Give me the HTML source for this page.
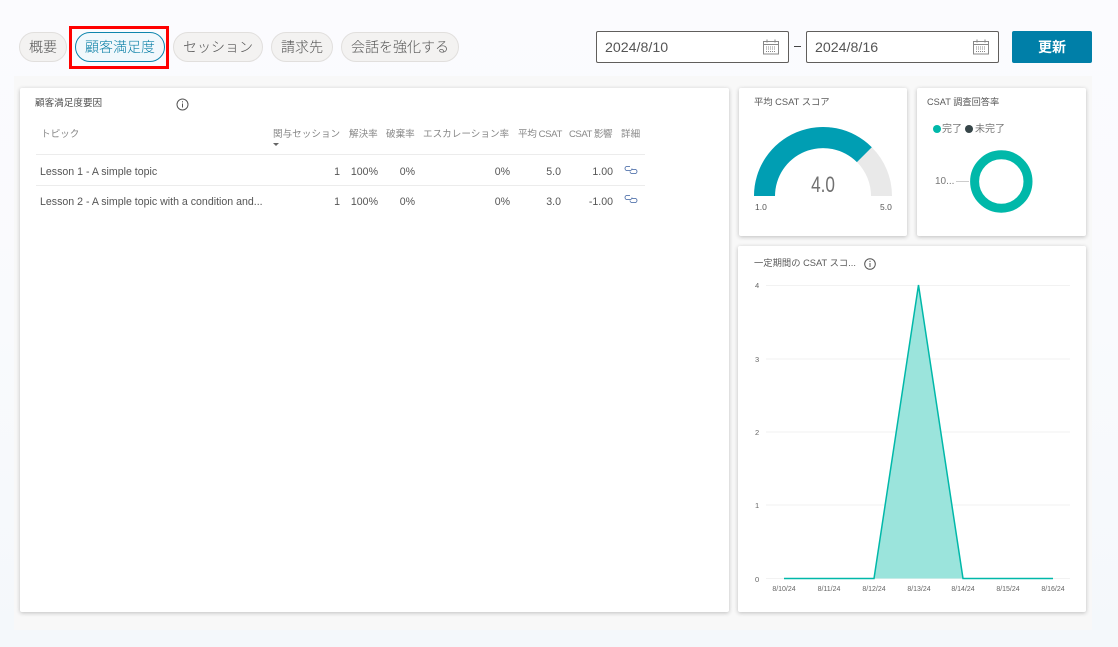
<!DOCTYPE html>
<html lang="ja"><head><meta charset="utf-8"><title>顧客満足度</title>
<style>
html,body{margin:0;padding:0}
body{width:1118px;height:647px;overflow:hidden;position:relative;background:linear-gradient(180deg,#fbfbfe 0,#f9fafd 50%,#f4f8fb 100%);font-family:"Liberation Sans","Noto Sans CJK JP",sans-serif;color:#323130}
.a{position:absolute;white-space:nowrap}
.pill{position:absolute;top:32px;height:30px;box-sizing:border-box;border:1px solid #e1dfdd;border-radius:15px;background:#f3f2f1;font-size:14px;line-height:28px;text-align:center;color:#555;font-weight:300}
.date{position:absolute;top:31px;width:193px;height:32px;box-sizing:border-box;border:1px solid #605e5c;border-radius:2px;background:#fff;font-size:14.2px;line-height:32px;padding-left:8px;color:#555}
.card{position:absolute;background:#fff;border-radius:2px;box-shadow:0 1px 4px rgba(0,0,0,.24)}
.h{position:absolute;top:128px;font-size:9.6px;line-height:13px;color:#888;white-space:nowrap}
.c{position:absolute;font-size:10.6px;line-height:14px;color:#555;white-space:nowrap}
.r{text-align:right}
.line{position:absolute;left:36px;width:609px;height:1px;background:#ececec}
.t{font-size:9.5px;color:#5a5a5a}
.x{position:absolute;top:585px;font-size:7px;line-height:9px;color:#666;width:40px;text-align:center}
.y{position:absolute;left:755px;font-size:7.5px;line-height:9px;color:#666}
</style></head><body>
<div class="a" style="left:14px;top:76px;width:1078px;height:554px;background:#f8f8f8"></div>

<div class="pill" style="left:19px;width:48px">概要</div>
<div class="pill" style="left:75px;width:90px;background:#f1f8fc;border-color:#0d85ad;color:#0a7fa6">顧客満足度</div>
<div class="pill" style="left:173px;width:90px">セッション</div>
<div class="pill" style="left:271px;width:62px">請求先</div>
<div class="pill" style="left:341px;width:118px">会話を強化する</div>
<div class="a" style="left:69px;top:26px;width:100px;height:43px;box-sizing:border-box;border:3px solid #f00"></div>

<div class="date" style="left:596px">2024/8/10</div>
<svg class="a" style="left:763px;top:39px" width="17" height="16" viewBox="0 0 17 16" fill="none" stroke="#888"><rect x=".5" y="2.5" width="15" height="12.5"/><path d="M.5 5.5h15M4 .5v3M12 .5v3"/><path d="M3 8h10M3 10h10M3 12.500h10" stroke-dasharray="1 1"/></svg>
<div class="a" style="left:794px;top:46px;width:7px;height:1px;background:#444"></div>
<div class="date" style="left:806px">2024/8/16</div>
<svg class="a" style="left:973px;top:39px" width="17" height="16" viewBox="0 0 17 16" fill="none" stroke="#888"><rect x=".5" y="2.5" width="15" height="12.500"/><path d="M.5 5.5h15M4 .5v3M12 .5v3"/><path d="M3 8h10M3 10h10M3 12.500h10" stroke-dasharray="1 1"/></svg>
<div class="a" style="left:1012px;top:31px;width:80px;height:32px;background:#007fa8;border-radius:2px;color:#fff;font-size:14px;line-height:32px;text-align:center;font-weight:700">更新</div>

<div class="card" style="left:20px;top:88px;width:709px;height:524px"></div>
<div class="a" style="left:35px;top:97px;font-size:9.6px;line-height:13px;color:#555">顧客満足度要因</div>
<svg class="a" style="left:176px;top:98px" width="13" height="13" viewBox="0 0 13 13" fill="none" stroke="#555"><circle cx="6.500" cy="6.500" r="5.500"/><path d="M6.500 5.500v4M6.500 3.200v1.200"/></svg>

<div class="h" style="left:41px">トピック</div>
<div class="h" style="left:273px">関与セッション</div>
<div class="a" style="left:273px;top:143px;width:0;height:0;border:3px solid transparent;border-top:3px solid #666"></div>
<div class="h" style="left:349px">解決率</div>
<div class="h" style="left:386px">破棄率</div>
<div class="h" style="left:423px">エスカレーション率</div>
<div class="h" style="left:518px;letter-spacing:-.4px">平均 CSAT</div>
<div class="h" style="left:569px;letter-spacing:-.5px">CSAT 影響</div>
<div class="h" style="left:621px">詳細</div>
<div class="line" style="top:154px"></div>
<div class="line" style="top:185px"></div>

<div class="c" style="left:40px;top:165px">Lesson 1 - A simple topic</div>
<div class="c r" style="left:320px;width:20px;top:165px">1</div>
<div class="c r" style="left:340px;width:38px;top:165px">100%</div>
<div class="c r" style="left:385px;width:30px;top:165px">0%</div>
<div class="c r" style="left:470px;width:40px;top:165px">0%</div>
<div class="c r" style="left:521px;width:40px;top:165px">5.0</div>
<div class="c r" style="left:573px;width:40px;top:165px">1.00</div>
<svg class="a" style="left:624px;top:165px" width="14" height="10" viewBox="0 0 14 10" fill="none" stroke="#3a5fa0" stroke-width=".8"><path d="M6 1.500H3a2 2 0 0 0 0 4h3a2 2 0 0 0 2-2"/><path d="M8 4.500h3a2 2 0 0 1 0 4H8a2 2 0 0 1-2-2"/></svg>

<div class="c" style="left:40px;top:195px">Lesson 2 - A simple topic with a condition and...</div>
<div class="c r" style="left:320px;width:20px;top:195px">1</div>
<div class="c r" style="left:340px;width:38px;top:195px">100%</div>
<div class="c r" style="left:385px;width:30px;top:195px">0%</div>
<div class="c r" style="left:470px;width:40px;top:195px">0%</div>
<div class="c r" style="left:521px;width:40px;top:195px">3.0</div>
<div class="c r" style="left:573px;width:40px;top:195px">-1.00</div>
<svg class="a" style="left:624px;top:194px" width="14" height="10" viewBox="0 0 14 10" fill="none" stroke="#3a5fa0" stroke-width=".8"><path d="M6 1.500H3a2 2 0 0 0 0 4h3a2 2 0 0 0 2-2"/><path d="M8 4.500h3a2 2 0 0 1 0 4H8a2 2 0 0 1-2-2"/></svg>

<div class="card" style="left:739px;top:88px;width:168px;height:148px"></div>
<div class="a t" style="left:754px;top:96px;line-height:13px;font-size:9.3px">平均 CSAT スコア</div>
<svg class="a" style="left:739px;top:88px" width="168" height="148"><path d="M15 108A69 69 0 0 1 153 108H132A48 48 0 0 0 36 108Z" fill="#e9e9e9"/><path d="M15 108A69 69 0 0 1 132.800 59.200L117.900 74.100A48 48 0 0 0 36 108Z" fill="#009eb3"/></svg>
<div class="a" style="left:803px;top:171px;width:40px;text-align:center;font-size:22px;line-height:28px;color:#707070;font-weight:300;transform:scaleX(.78)">4.0</div>
<div class="a" style="left:755px;top:202px;font-size:8.500px;line-height:11px;color:#555">1.0</div>
<div class="a" style="left:880px;top:202px;font-size:8.500px;line-height:11px;color:#555">5.0</div>

<div class="card" style="left:917px;top:88px;width:169px;height:148px"></div>
<div class="a t" style="left:927px;top:96px;line-height:13px;font-size:9.2px">CSAT 調査回答率</div>
<div class="a" style="left:933px;top:125px;width:8px;height:8px;border-radius:50%;background:#00b8a9"></div>
<div class="a t" style="left:942px;top:123px;line-height:13px;color:#777;font-size:10px">完了</div>
<div class="a" style="left:965px;top:125px;width:8px;height:8px;border-radius:50%;background:#374649"></div>
<div class="a t" style="left:975px;top:123px;line-height:13px;color:#777;font-size:10px">未完了</div>
<div class="a" style="left:935px;top:175px;font-size:10px;line-height:13px;color:#777">10...</div>
<div class="a" style="left:956px;top:181px;width:13px;height:1px;background:#ccc"></div>
<svg class="a" style="left:968px;top:149px" width="66" height="66"><circle cx="33.300" cy="32.500" r="26.700" fill="none" stroke="#00b8a9" stroke-width="9"/></svg>

<div class="card" style="left:738px;top:246px;width:348px;height:366px"></div>
<div class="a t" style="left:754px;top:257px;line-height:13px;font-size:9.3px">一定期間の CSAT スコ...</div>
<svg class="a" style="left:864px;top:258px" width="12" height="12" viewBox="0 0 12 12" fill="none" stroke="#555"><circle cx="6" cy="6" r="5.300"/><path d="M6 5v4M6 2.800v1.200"/></svg>
<svg class="a" style="left:738px;top:246px" width="348" height="366">
<path d="M28 39.500H332M28 113H332M28 186H332M28 259H332M28 332.500H332" stroke="#f2f2f2" fill="none"/>
<path d="M136 332.500L180.500 39L225 332.500Z" fill="#9be4dc"/>
<path d="M46 332.500H136L180.500 39L225 332.500H315" fill="none" stroke="#00b8a9" stroke-width="1.500"/>
</svg>
<div class="y" style="top:281px">4</div><div class="y" style="top:355px">3</div><div class="y" style="top:428px">2</div><div class="y" style="top:501px">1</div><div class="y" style="top:575px">0</div>
<div class="x" style="left:764px">8/10/24</div>
<div class="x" style="left:809px">8/11/24</div>
<div class="x" style="left:854px">8/12/24</div>
<div class="x" style="left:899px">8/13/24</div>
<div class="x" style="left:943px">8/14/24</div>
<div class="x" style="left:988px">8/15/24</div>
<div class="x" style="left:1033px">8/16/24</div>
</body></html>
